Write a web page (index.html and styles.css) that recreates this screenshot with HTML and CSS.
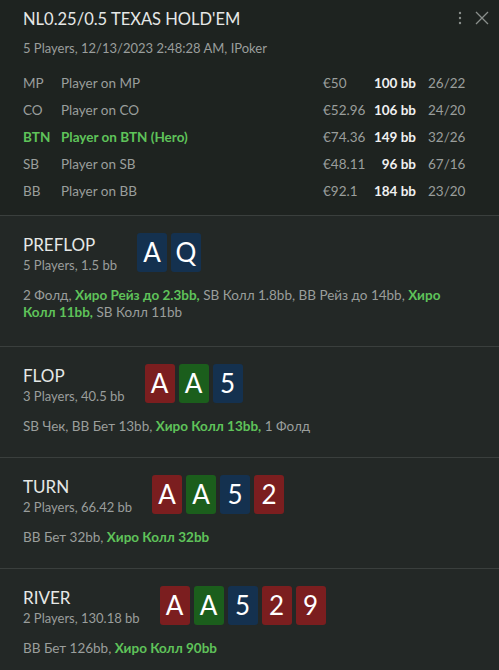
FILE: index.html
```html
<html>
<head>
	<title>Hand</title>
	<link rel="stylesheet" href="styles.css">
</head>
<body>
	<div id="hand">
		<div class="head">
			<div class="top">
				<div class="title">NL0.25/0.5 TEXAS HOLD'EM</div>
				<div class="tools">
					<svg width="6" height="14" viewBox="0 0 6 14"><circle cx="3" cy="2" r="1.2" fill="#8a8f8c"/><circle cx="3" cy="7" r="1.2" fill="#8a8f8c"/><circle cx="3" cy="12" r="1.2" fill="#8a8f8c"/></svg>
					<svg width="14" height="14" viewBox="0 0 14 14"><path d="M1 1 L13 13 M13 1 L1 13" stroke="#8a8f8c" stroke-width="1.3"/></svg>
				</div>
			</div>
			<div class="sub">5 Players, 12/13/2023 2:48:28 AM, IPoker</div>

			<div class="players">
				<div class="row"><span>MP</span><span>Player on MP</span><span>€50</span><b>100 bb</b><span class="st">26/22</span></div>
				<div class="row"><span>CO</span><span>Player on CO</span><span>€52.96</span><b>106 bb</b><span class="st">24/20</span></div>
				<div class="row hero"><span>BTN</span><span>Player on BTN (Hero)</span><span class="eu">€74.36</span><b>149 bb</b><span class="st">32/26</span></div>
				<div class="row"><span>SB</span><span>Player on SB</span><span>€48.11</span><b>96 bb</b><span class="st">67/16</span></div>
				<div class="row"><span>BB</span><span>Player on BB</span><span>€92.1</span><b>184 bb</b><span class="st">23/20</span></div>
			</div>
		</div>

		<div class="street">
			<div class="shead">
				<div class="sname"><div class="sttl">PREFLOP</div><div class="ssub">5 Players, 1.5 bb</div></div>
				<div class="cards"><span class="c d">A</span><span class="c d">Q</span></div>
			</div>
			<div class="acts">2 Фолд, <b>Хиро Рейз до 2.3bb,</b> SB Колл 1.8bb, BB Рейз до 14bb, <b>Хиро</b> <b>Колл 11bb,</b> SB Колл 11bb</div>
		</div>

		<div class="street">
			<div class="shead">
				<div class="sname"><div class="sttl">FLOP</div><div class="ssub">3 Players, 40.5 bb</div></div>
				<div class="cards"><span class="c h">A</span><span class="c g">A</span><span class="c d">5</span></div>
			</div>
			<div class="acts">SB Чек, BB Бет 13bb, <b>Хиро Колл 13bb,</b> 1 Фолд</div>
		</div>

		<div class="street">
			<div class="shead">
				<div class="sname"><div class="sttl">TURN</div><div class="ssub">2 Players, 66.42 bb</div></div>
				<div class="cards"><span class="c h">A</span><span class="c g">A</span><span class="c d">5</span><span class="c h">2</span></div>
			</div>
			<div class="acts">BB Бет 32bb, <b>Хиро Колл 32bb</b></div>
		</div>

		<div class="street">
			<div class="shead">
				<div class="sname"><div class="sttl">RIVER</div><div class="ssub">2 Players, 130.18 bb</div></div>
				<div class="cards"><span class="c h">A</span><span class="c g">A</span><span class="c d">5</span><span class="c h">2</span><span class="c h">9</span></div>
			</div>
			<div class="acts">BB Бет 126bb, <b>Хиро Колл 90bb</b></div>
		</div>
	</div>
</body>
</html>
```

FILE: styles.css
```css
body {
	margin: 0;
	overflow: hidden;
	background-color: #232826;
	font-family: Lato, "Noto Sans", sans-serif;
	font-size: 13.5px;
	color: #9a9e9c;
}
#hand {
	width: 499px;
	height: 670px;
	background-color: #232826;
}
.head {
	background-color: #1e2320;
	padding: 7px 0 10px 23px;
	border-bottom: 1px solid #3a3f3d;
}
.top {
	display: flex;
	justify-content: space-between;
	align-items: flex-start;
}
.title {
	font-size: 16.5px;
	color: #e6e8e7;
	line-height: 24px;
}
.tools {
	display: flex;
	align-items: center;
	gap: 12px;
	padding: 4px 10px 0 0;
}
.sub {
	margin-top: 8px;
	line-height: 18px;
	font-size: 13px;
}
.players {
	margin-top: 13px;
	padding-right: 37px;
}
.row {
	display: grid;
	grid-template-columns: 38px 1fr 50px 43px 46px;
	line-height: 27px;
}
.row b {
	color: #f0f0f0;
	text-align: right;
}
.row .st {
	padding-left: 12px;
}
.hero span {
	color: #5fc35a;
	font-weight: bold;
}
.hero .eu, .hero .st {
	color: #9a9e9c;
	font-weight: normal;
}
.street {
	padding: 17px 23px 0 23px;
	border-bottom: 1px solid #3a3f3d;
	height: 93px;
}
.street:nth-child(2) {
	height: 113px;
}
.shead {
	display: flex;
	gap: 20px;
	align-items: flex-start;
}
.sttl {
	font-size: 17px;
	color: #e6e8e7;
	line-height: 22px;
	margin-top: 1px;
}
.ssub {
	line-height: 19px;
	font-size: 13px;
}
.cards {
	display: flex;
	gap: 4px;
}
.c {
	width: 30px;
	height: 39px;
	border-radius: 3px;
	color: #ffffff;
	font-size: 26px;
	text-align: center;
	line-height: 39px;
}
.d { background-color: #14314f; }
.h { background-color: #7b1e1f; }
.g { background-color: #1b5e1c; }
.acts {
	margin-top: 12px;
	line-height: 17px;
}
.acts b {
	color: #5fc35a;
}
```
